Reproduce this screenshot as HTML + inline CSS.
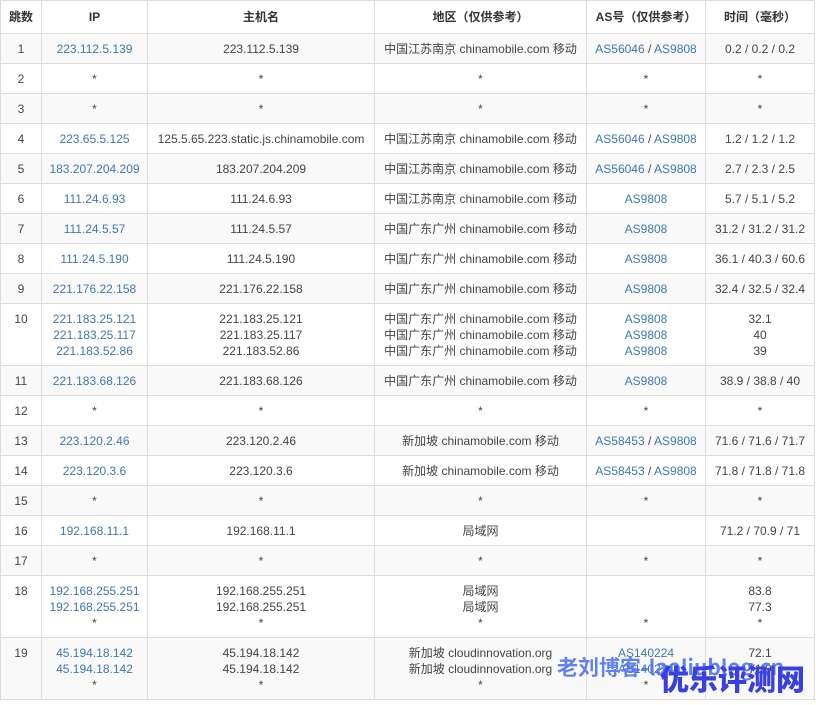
<!DOCTYPE html>
<html><head><meta charset="utf-8"><style>
body{margin:0;background:#fff;font-family:"Liberation Sans","Noto Sans CJK SC",sans-serif;font-size:12px;color:#444;}
table{border-collapse:collapse;position:absolute;left:0;top:0;width:814px;table-layout:fixed}
td,th{border:1px solid #ddd;text-align:center;vertical-align:middle;padding:0 3px;line-height:16px;white-space:nowrap;overflow:hidden}
th{height:32px;font-weight:bold;font-size:12px;color:#333}
td{height:29px}
tr.t td{height:61px}
tr.t td.first{height:54px;vertical-align:top;padding-top:7px}
tbody tr:nth-child(odd) td{background:#f9f9f9}
a{color:#3f78b0;text-decoration:none}
.w1{position:absolute;left:557px;top:652px;color:#4a6cf0;font-size:21px;font-weight:bold;opacity:.85;font-family:"Noto Sans CJK SC",sans-serif}
.w2{position:absolute;left:660px;top:660px;color:#3a3fe0;font-size:29px;font-weight:900;font-family:"Noto Sans CJK SC",sans-serif;line-height:36px}
</style></head><body>
<table>
<colgroup><col style="width:41px"><col style="width:106px"><col style="width:227px"><col style="width:212px"><col style="width:119px"><col style="width:109px"></colgroup>
<thead><tr><th>跳数</th><th>IP</th><th>主机名</th><th>地区（仅供参考）</th><th>AS号（仅供参考）</th><th>时间（毫秒）</th></tr></thead>
<tbody>
<tr><td>1</td><td><a>223.112.5.139</a></td><td>223.112.5.139</td><td>中国江苏南京 chinamobile.com 移动</td><td><a>AS56046</a> / <a>AS9808</a></td><td>0.2 / 0.2 / 0.2</td></tr>
<tr><td>2</td><td>*</td><td>*</td><td>*</td><td>*</td><td>*</td></tr>
<tr><td>3</td><td>*</td><td>*</td><td>*</td><td>*</td><td>*</td></tr>
<tr><td>4</td><td><a>223.65.5.125</a></td><td>125.5.65.223.static.js.chinamobile.com</td><td>中国江苏南京 chinamobile.com 移动</td><td><a>AS56046</a> / <a>AS9808</a></td><td>1.2 / 1.2 / 1.2</td></tr>
<tr><td>5</td><td><a>183.207.204.209</a></td><td>183.207.204.209</td><td>中国江苏南京 chinamobile.com 移动</td><td><a>AS56046</a> / <a>AS9808</a></td><td>2.7 / 2.3 / 2.5</td></tr>
<tr><td>6</td><td><a>111.24.6.93</a></td><td>111.24.6.93</td><td>中国江苏南京 chinamobile.com 移动</td><td><a>AS9808</a></td><td>5.7 / 5.1 / 5.2</td></tr>
<tr><td>7</td><td><a>111.24.5.57</a></td><td>111.24.5.57</td><td>中国广东广州 chinamobile.com 移动</td><td><a>AS9808</a></td><td>31.2 / 31.2 / 31.2</td></tr>
<tr><td>8</td><td><a>111.24.5.190</a></td><td>111.24.5.190</td><td>中国广东广州 chinamobile.com 移动</td><td><a>AS9808</a></td><td>36.1 / 40.3 / 60.6</td></tr>
<tr><td>9</td><td><a>221.176.22.158</a></td><td>221.176.22.158</td><td>中国广东广州 chinamobile.com 移动</td><td><a>AS9808</a></td><td>32.4 / 32.5 / 32.4</td></tr>
<tr class="t"><td class="first">10</td><td><a>221.183.25.121</a><br><a>221.183.25.117</a><br><a>221.183.52.86</a></td><td>221.183.25.121<br>221.183.25.117<br>221.183.52.86</td><td>中国广东广州 chinamobile.com 移动<br>中国广东广州 chinamobile.com 移动<br>中国广东广州 chinamobile.com 移动</td><td><a>AS9808</a><br><a>AS9808</a><br><a>AS9808</a></td><td>32.1<br>40<br>39</td></tr>
<tr><td>11</td><td><a>221.183.68.126</a></td><td>221.183.68.126</td><td>中国广东广州 chinamobile.com 移动</td><td><a>AS9808</a></td><td>38.9 / 38.8 / 40</td></tr>
<tr><td>12</td><td>*</td><td>*</td><td>*</td><td>*</td><td>*</td></tr>
<tr><td>13</td><td><a>223.120.2.46</a></td><td>223.120.2.46</td><td>新加坡 chinamobile.com 移动</td><td><a>AS58453</a> / <a>AS9808</a></td><td>71.6 / 71.6 / 71.7</td></tr>
<tr><td>14</td><td><a>223.120.3.6</a></td><td>223.120.3.6</td><td>新加坡 chinamobile.com 移动</td><td><a>AS58453</a> / <a>AS9808</a></td><td>71.8 / 71.8 / 71.8</td></tr>
<tr><td>15</td><td>*</td><td>*</td><td>*</td><td>*</td><td>*</td></tr>
<tr><td>16</td><td><a>192.168.11.1</a></td><td>192.168.11.1</td><td>局域网</td><td></td><td>71.2 / 70.9 / 71</td></tr>
<tr><td>17</td><td>*</td><td>*</td><td>*</td><td>*</td><td>*</td></tr>
<tr class="t"><td class="first">18</td><td><a>192.168.255.251</a><br><a>192.168.255.251</a><br>*</td><td>192.168.255.251<br>192.168.255.251<br>*</td><td>局域网<br>局域网<br>*</td><td><br><br>*</td><td>83.8<br>77.3<br>*</td></tr>
<tr class="t"><td class="first">19</td><td><a>45.194.18.142</a><br><a>45.194.18.142</a><br>*</td><td>45.194.18.142<br>45.194.18.142<br>*</td><td>新加坡 cloudinnovation.org<br>新加坡 cloudinnovation.org<br>*</td><td><a>AS140224</a><br><a>AS140224</a><br>*</td><td>72.1<br>71.9<br>*</td></tr>
</tbody></table>
<div class="w1">老刘博客-laoliublog.cn</div>
<div class="w2">优乐评测网</div>
</body></html>
